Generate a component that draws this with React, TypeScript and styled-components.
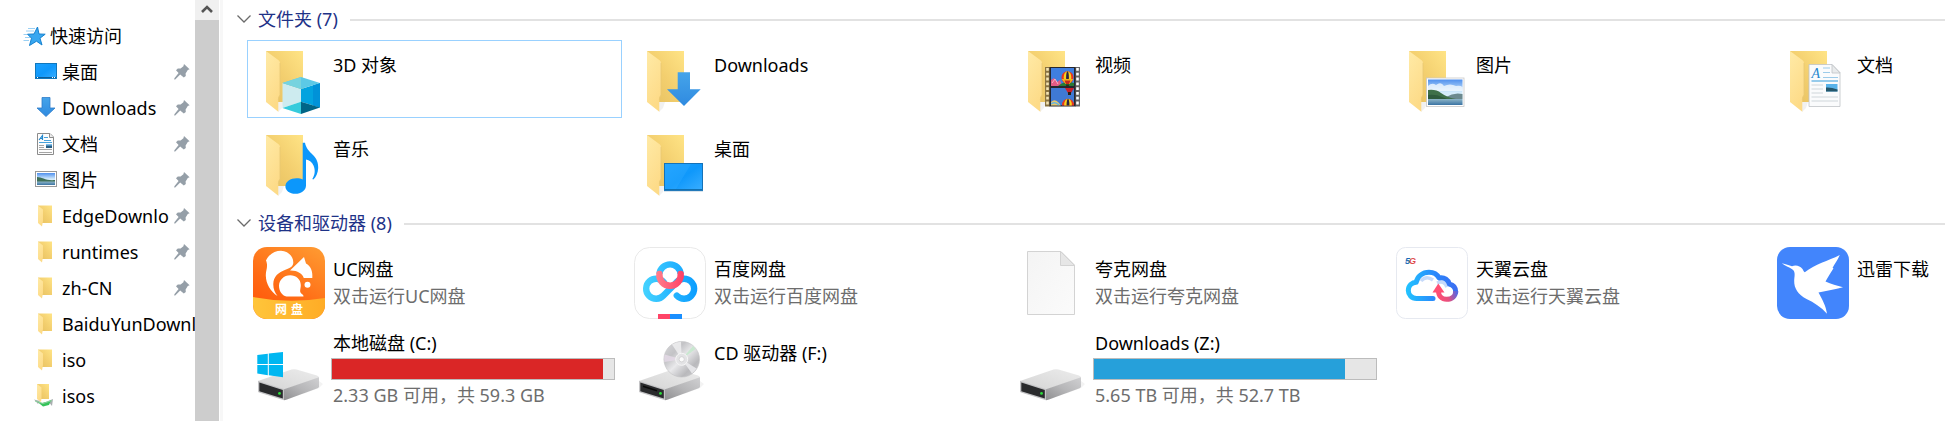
import React from "react";
import styled, { createGlobalStyle } from "styled-components";

const GlobalStyle = createGlobalStyle`
  *, *::before, *::after { box-sizing: border-box; }
  html, body, #root { height: 100%; }
  body {
    margin: 0;
    overflow: hidden;
    background: #fff;
    color: #000;
    font-family: "Noto Sans", "Noto Sans CJK SC", sans-serif;
    font-size: 18px;
    line-height: 24px;
  }
  a { color: inherit; text-decoration: none; }
  button { font: inherit; color: inherit; border: 0; padding: 0; background: none; }
  h2, ul { margin: 0; padding: 0; font-weight: 400; font-size: 18px; }
  ul { list-style: none; }
  svg { display: block; flex: none; }
`;

const Window = styled.div`
  display: flex;
  height: 100%;
  overflow: hidden;
`;

const Sidebar = styled.nav`
  flex: none;
  width: 195px;
  padding-top: 18px;
  overflow: hidden;
`;

const NavLink = styled.a<{ $root?: boolean }>`
  display: flex;
  align-items: center;
  gap: 4px;
  height: 36px;
  padding-left: ${(p) => (p.$root ? 22 : 34)}px;
`;

const NavLabel = styled.span`
  flex: 1;
  min-width: 0;
  overflow: hidden;
  white-space: nowrap;
`;

const PinSlot = styled.span`
  flex: none;
  width: 18px;
  margin-right: 4px;
`;

const Scrollbar = styled.div`
  flex: none;
  display: flex;
  flex-direction: column;
  width: 24px;
  background: #f0f0f0;
`;

const ScrollUp = styled.button`
  display: flex;
  align-items: center;
  justify-content: center;
  height: 20px;
  background: #f0f0f0;
`;

const ScrollThumb = styled.div`
  flex: 1;
  background: #cdcdcd;
`;

const Splitter = styled.div`
  flex: none;
  width: 4px;
  background: #f7f7f7;
  border-left: 1px solid #fff;
`;

const Content = styled.main`
  flex: 1;
  min-width: 0;
  padding-left: 13px;
  overflow: hidden;
`;

const Group = styled.section`
  margin-bottom: 2px;
`;

const GroupHeader = styled.h2`
  height: 40px;
  display: flex;
  align-items: center;
  gap: 12px;
  color: #1e3287;
  &::after {
    content: "";
    flex: 1;
    height: 2px;
    background: #e2e2e2;
  }
`;

const GroupToggle = styled.button`
  display: flex;
  align-items: center;
  gap: 6px;
  line-height: 24px;
  padding-bottom: 2px;
`;

const TileGrid = styled.ul`
  display: grid;
  grid-template-columns: repeat(5, 375px);
  grid-auto-rows: 78px;
  gap: 6px;
  padding-left: 11px;
`;

const Tile = styled.a<{ $selected?: boolean }>`
  display: flex;
  gap: 6px;
  height: 100%;
  padding: 2px 5px;
  border: 1px solid ${(p) => (p.$selected ? "#99d1ff" : "transparent")};
`;

const TileBody = styled.div<{ $drive?: boolean }>`
  flex: 1;
  min-width: 0;
  display: flex;
  flex-direction: column;
  padding-top: ${(p) => (p.$drive ? 0 : 10)}px;
  white-space: nowrap;
`;

const Title = styled.span`
  padding-left: 2px;
`;

const Caption = styled.span`
  padding-left: 2px;
  margin-top: 3px;
  color: #6d6d6d;
`;

const Meter = styled.div`
  flex: none;
  height: 22px;
  width: 284px;
  margin-top: 3px;
  border: 1px solid #bcbcbc;
  background: #e6e6e6;
`;

const MeterFill = styled.div<{ $full?: boolean }>`
  height: 100%;
  background: ${(p) => (p.$full ? "#da2626" : "#26a0da")};
`;

const SharedDefs = styled.svg`
  position: absolute;
`;

/* ---------- shared gradients ---------- */

const Gradients = () => (
  <SharedDefs width="0" height="0" aria-hidden="true">
    <defs>
      <linearGradient id="fBack" x1="0" y1="1" x2="1" y2="0">
        <stop offset="0" stopColor="#e6c05f" />
        <stop offset="0.5" stopColor="#f3cf6f" />
        <stop offset="1" stopColor="#ffe486" />
      </linearGradient>
      <linearGradient id="fFlap" x1="0" y1="0" x2="0.4" y2="1">
        <stop offset="0" stopColor="#ffeaa6" />
        <stop offset="1" stopColor="#fddb88" />
      </linearGradient>
      <linearGradient id="sky" x1="0" y1="0" x2="0" y2="1">
        <stop offset="0" stopColor="#4f90ee" />
        <stop offset="0.5" stopColor="#d3ebfb" />
        <stop offset="1" stopColor="#e8f4fa" />
      </linearGradient>
      <linearGradient id="sea" x1="0" y1="0" x2="0" y2="1">
        <stop offset="0" stopColor="#8fb6c8" />
        <stop offset="1" stopColor="#3a73a3" />
      </linearGradient>
      <linearGradient id="screen" x1="0" y1="0" x2="1" y2="1">
        <stop offset="0" stopColor="#1da2ff" />
        <stop offset="0.5" stopColor="#0f98fb" />
        <stop offset="1" stopColor="#3aaeff" />
      </linearGradient>
      <linearGradient id="arrow" x1="0" y1="0" x2="0" y2="1">
        <stop offset="0" stopColor="#45a4ea" />
        <stop offset="1" stopColor="#2f8ae0" />
      </linearGradient>
      <linearGradient id="dTop" x1="0" y1="1" x2="1" y2="0">
        <stop offset="0" stopColor="#d4d4d4" />
        <stop offset="1" stopColor="#ececec" />
      </linearGradient>
      <linearGradient id="dSide" x1="0" y1="1" x2="1" y2="0">
        <stop offset="0" stopColor="#8f8f91" />
        <stop offset="0.5" stopColor="#b6b6b8" />
        <stop offset="1" stopColor="#d0d0d2" />
      </linearGradient>
      <linearGradient id="page" x1="0" y1="0" x2="1" y2="1">
        <stop offset="0" stopColor="#f4f4f4" />
        <stop offset="1" stopColor="#fbfbfb" />
      </linearGradient>
    </defs>
  </SharedDefs>
);

/* ---------- sidebar icons ---------- */

const Small = ({ children }: { children: React.ReactNode }) => (
  <svg width="24" height="24" viewBox="0 0 24 24" aria-hidden="true">{children}</svg>
);

const StarIcon = () => (
  <Small>
    <path d="M15.5 3 17 10 23.2 10.200 18 14.200 20 21 14.500 17.200 7.500 21.500 9.500 14.200 5.500 10.200 12 10Z" fill="#38a7f0" stroke="#1581cf" strokeWidth="1" />
    <path d="M6 4.5H13M4 7H12M1.500 10.500H5M3 13.500H8M1.500 16.500H7" stroke="#8ecbf3" strokeWidth="0.9" />
  </Small>
);

const DesktopSmall = () => (
  <Small>
    <rect x="1.5" y="3.5" width="21" height="15" fill="url(#screen)" stroke="#1178bd" />
    <path d="M2 17.5H22" stroke="#0c5d98" />
    <path d="M3 17.5H4M18 17.5H19M20 17.5H21" stroke="#fff" />
  </Small>
);

const DownloadSmall = () => (
  <Small>
    <path d="M8 1.5H16V12H21L12 20.5 3 12H8Z" fill="url(#arrow)" stroke="#2d7cc9" strokeWidth="0.8" />
  </Small>
);

const DocSmall = () => (
  <Small>
    <path d="M3.5 1.5H16L19.5 5V22.5H3.5Z" fill="#fdfdfd" stroke="#8b8b8b" />
    <path d="M15.5 1.5V5.5H19.5" fill="#eee" stroke="#8b8b8b" />
    <path d="M5 8 8.5 3.5V8M6 6.5H9" fill="none" stroke="#2387cc" strokeWidth="1.2" />
    <path d="M10 5.500H14M10 8.500H17M5 10.500H18" stroke="#49a3dc" />
    <path d="M5 13.500H10M5 15.500H10M5 17.5H18M5 20.500H18" stroke="#a5a5a5" />
    <rect x="12" y="12" width="6" height="4" fill="#285f86" />
    <path d="M12 12H18V13.500H12Z" fill="#7cc0ee" />
  </Small>
);

const PictureSmall = () => (
  <Small>
    <rect x="1.5" y="3.5" width="21" height="15" fill="#fff" stroke="#999" />
    <rect x="3" y="5" width="18" height="12" fill="url(#sky)" />
    <path d="M3 9C8 9 12 13 21 12V14H3Z" fill="#3f6f59" />
    <path d="M3 13.5H21V17H3Z" fill="url(#sea)" />
  </Small>
);

const FolderSmall = () => (
  <Small>
    <path d="M4 1.5H18V19H4Z" fill="url(#fBack)" />
    <path d="M4 1.5 9 5.5V17L8 22.5 4 19Z" fill="url(#fFlap)" />
  </Small>
);

const SharedFolderSmall = () => (
  <Small>
    <path d="M3 0H15V15H3Z" fill="url(#fBack)" />
    <path d="M3 0 7.5 3.5V14L7 18 3 15Z" fill="url(#fFlap)" />
    <path d="M0 15.500 6 17 4 20ZM19 15 14 17 18 22Z" fill="#a9afb0" />
    <path d="M3 17.500 8 19 17 16.500 15 21 9 22.500Z" fill="#35c45a" />
    <path d="M1 17 9 19.5 18 16.5" stroke="#8ccf9d" fill="none" />
  </Small>
);

const PinIcon = () => (
  <svg width="18" height="18" viewBox="0 0 18 18" aria-hidden="true">
    <path d="M11 1 16.6 6.2 14.8 7 12.6 10.4 12.8 13 10.8 14.6 7.2 11.4 2.2 16.4 1.2 16.4 1.4 15.2 5.6 10 3 7.2 4.8 5.6 7.6 5.6 10.4 3.2Z" fill="#959fa8" />
  </svg>
);

/* ---------- tile icons ---------- */

const Large = ({ children }: { children: React.ReactNode }) => (
  <svg width="72" height="72" viewBox="0 0 72 72" aria-hidden="true">{children}</svg>
);

const FolderShape = () => (
  <>
    <path d="M25 69 29 65 31 59H25Z" fill="#f1f1f1" />
    <path d="M13 8H50V59H13Z" fill="url(#fBack)" />
    <path d="M13 8 25.6 17.2Q27 18.4 27 20V52Q25.3 53.5 25.3 57V68.7L13 59Z" fill="url(#fFlap)" />
    <path d="M27 20V52Q25.5 53.5 25.3 57" stroke="#e9c873" strokeWidth="0.8" fill="none" />
  </>
);

const Objects3DIcon = () => (
  <Large>
    <FolderShape />
    <path d="M29.5 40 48 46 48 58.7 29.5 65Z" fill="#cdebef" />
    <path d="M67 40 48 46V58.7L67 64.5Z" fill="#02a3df" />
    <path d="M60 42.2 67 40V64.5L60 62.4Z" fill="#0092d8" />
    <path d="M29.5 40 48 34 67 40 48 46Z" fill="#5cc9e6" />
    <path d="M29.5 40 48 34V46Z" fill="#76d3df" />
    <path d="M29.5 65 48 58.7V71Z" fill="#35cbdc" />
    <path d="M67 64.5 48 58.7V71Z" fill="#006587" />
  </Large>
);

const DownloadsIcon = () => (
  <Large>
    <FolderShape />
    <path d="M43.7 29.3H56V46.3H66.7L50 63 33 46.3H43.7Z" fill="url(#arrow)" />
  </Large>
);

const Balloon = ({ x, y }: { x: number; y: number }) => (
  <g transform={`translate(${x} ${y})`}>
    <ellipse rx="6" ry="6.2" fill="#e8361f" />
    <ellipse rx="3.8" ry="6.2" fill="#f7d21e" />
    <ellipse rx="1.4" ry="6.2" fill="#2c2440" />
    <path d="M-5.8 1.5H5.8L2 6.5H-2Z" fill="#f2b51b" />
    <path d="M-3 3H3L1.5 6.5H-1.5Z" fill="#c2271e" />
    <rect x="-1.4" y="7" width="2.8" height="2" fill="#3b2412" />
  </g>
);

const VideosIcon = () => (
  <Large>
    <FolderShape />
    <rect x="30" y="24" width="5" height="39.5" fill="#8a7340" />
    <rect x="60" y="24" width="5" height="39.5" fill="#666" />
    <path d="M32.5 25V63" stroke="#f3e4b5" strokeWidth="2.6" strokeDasharray="2.8 2" />
    <path d="M62.5 25V63" stroke="#fff" strokeWidth="2.6" strokeDasharray="2.8 2" />
    <rect x="34.5" y="24" width="26" height="39.5" fill="#26262c" />
    <clipPath id="frameA"><rect x="36" y="25" width="23" height="18" /></clipPath>
    <clipPath id="frameB"><rect x="36" y="45" width="23" height="17.5" /></clipPath>
    <g clipPath="url(#frameA)">
      <rect x="36" y="25" width="23" height="18" fill="#3f7fe0" />
      <path d="M36 37 39 35 42 39 45 37 47 43H36Z" fill="#e35c86" />
      <path d="M37 40 40 36 43 41" stroke="#f7b6c4" fill="none" />
      <path d="M43 43Q50 37 59 40V43Z" fill="#257a36" />
      <Balloon x={52.5} y={34.5} />
    </g>
    <g clipPath="url(#frameB)">
      <rect x="36" y="45" width="23" height="17.5" fill="#3f79d4" />
      <path d="M50 45H59L56 50H53Z" fill="#c9202a" />
      <rect x="53" y="49" width="3" height="3" fill="#2b1b12" />
      <path d="M36 59Q40 55 44 60L46 63H36Z" fill="#e8c66a" />
      <path d="M36 61Q40 58 44 62" stroke="#62b4e6" strokeWidth="1.5" fill="none" />
      <Balloon x={53} y={62} />
    </g>
  </Large>
);

const PicturesIcon = () => (
  <Large>
    <FolderShape />
    <rect x="30.5" y="35" width="37.5" height="28.5" fill="#fff" stroke="#c9c9c9" strokeWidth="0.8" />
    <rect x="32" y="36.5" width="34.5" height="25.5" fill="url(#sky)" />
    <path d="M32 43Q36 39 40 42 45 38 48 43 54 40 60 43 64 42 66.5 44V48H32Z" fill="#f3f9fe" opacity="0.8" />
    <path d="M50 54Q58 49 66.5 51V56H50Z" fill="#6d8a8f" />
    <path d="M32 47Q40 46 45 50 52 55 60 56H32Z" fill="#3f7049" />
    <path d="M32 52Q40 51 46 54L54 57H32Z" fill="#2f5b3d" />
    <rect x="32" y="56" width="34.5" height="6" fill="url(#sea)" />
  </Large>
);

const DocumentsIcon = () => (
  <Large>
    <FolderShape />
    <path d="M32 21.5H55L63 29.5V63.5H32Z" fill="#fafbfc" stroke="#bfc3c6" strokeWidth="0.8" />
    <path d="M55 21.5V30H63Z" fill="#e9ebec" stroke="#bfc3c6" strokeWidth="0.8" />
    <text x="34.5" y="35" fontFamily="Liberation Serif, serif" fontStyle="italic" fontSize="14" fill="#1f87cf">A</text>
    <path d="M46 25H53M46 29.5H53M46 34.5H61" stroke="#9ccbe9" />
    <path d="M34.5 38H61" stroke="#6bb6e4" strokeWidth="1.4" />
    <path d="M34.5 42H46M34.5 46H46M34.5 50H46M34.5 54H61M34.5 58H61" stroke="#cfd6da" />
    <rect x="49" y="41" width="11.5" height="7.5" fill="#59b3ea" />
    <path d="M49 44.5Q54 44 60.5 46.5V48.5H49Z" fill="#24566b" />
  </Large>
);

const MusicIcon = () => (
  <Large>
    <FolderShape />
    <path d="M49.7 15.7H52C53 21 56 24 60 28 64 32 65.3 36 65.2 41 65 46 63 50 60.3 52.6L59.3 52C62 48 62.5 43 60.5 38.5 59 35 56.5 33 53 32.5V58.5C53 63.5 48 66.8 42.4 66.8 36.5 66.8 32.4 63.5 32.4 59.5 32.4 54.5 37.5 51.3 43.5 51.3 46 51.3 48.5 51.8 49.7 52.5Z" fill="#0c97fb" />
  </Large>
);

const DesktopIcon = () => (
  <Large>
    <FolderShape />
    <rect x="30.5" y="36.5" width="38" height="27" fill="url(#screen)" stroke="#1572b8" />
    <path d="M31 37H57L42 62H31Z" fill="#35acff" opacity="0.35" />
    <path d="M31 62.6H68" stroke="#0f6cab" strokeWidth="1" />
    <path d="M30 64.4H69" stroke="#c9d9e4" strokeWidth="0.8" />
  </Large>
);

const UcIcon = () => (
  <Large>
    <defs>
      <linearGradient id="ucBg" x1="1" y1="0" x2="0.4" y2="1">
        <stop offset="0" stopColor="#ff9d33" />
        <stop offset="0.7" stopColor="#ff6a14" />
        <stop offset="1" stopColor="#ff5a0c" />
      </linearGradient>
      <linearGradient id="ucBand" x1="0" y1="0" x2="1" y2="0">
        <stop offset="0" stopColor="#ffc53a" />
        <stop offset="1" stopColor="#ffac26" />
      </linearGradient>
      <clipPath id="ucClip"><rect width="72" height="72" rx="14" /></clipPath>
    </defs>
    <g clipPath="url(#ucClip)">
      <rect width="72" height="72" fill="url(#ucBg)" />
      <path d="M0 50Q36 57 72 51V72H0Z" fill="url(#ucBand)" />
      <path d="M24.500 49C17.500 44.500 13 37 12.800 28.500 12.700 23 15.500 19.500 13 13.500 16 7 22 3.800 28 3.800 35 4.200 40.300 9 40.300 15.500 40.300 18.500 38.500 20.500 33 22.500 25 25.500 20.500 29.500 20.300 37 20.200 41.500 21.800 45.500 24.500 49Z" fill="#fff" />
      <path d="M37 23.500 51 10 53 16.500C57.500 19 60 24 59.300 31H50.800C49.500 26.500 44 23.200 37 23.500Z" fill="#fff" />
      <path d="M37.2 28.200C43 28.200 47.800 32.300 47.800 38 47.800 42 46.500 43.500 47.700 45.800 48.500 47.300 51 48 50.500 49.500H33.5C29 48.500 26 44 26 39 26 33 30.800 28.200 37.2 28.200Z" fill="#fff" />
      <circle cx="54.5" cy="37.8" r="3" fill="#fff" />
      <text x="22" y="67" fontSize="12" fontWeight="700" fill="#fff" fontFamily="Noto Sans CJK SC, sans-serif">网</text>
      <text x="38" y="67" fontSize="12" fontWeight="700" fill="#fff" fontFamily="Noto Sans CJK SC, sans-serif">盘</text>
    </g>
  </Large>
);

const BaiduIcon = () => (
  <Large>
    <defs>
      <linearGradient id="bdBlue" gradientUnits="userSpaceOnUse" x1="9" y1="0" x2="63" y2="0">
        <stop offset="0" stopColor="#45d3ff" />
        <stop offset="1" stopColor="#0b9dff" />
      </linearGradient>
      <linearGradient id="bdRed" gradientUnits="userSpaceOnUse" x1="22" y1="0" x2="50" y2="0">
        <stop offset="0" stopColor="#ff7f8c" />
        <stop offset="1" stopColor="#ff3f65" />
      </linearGradient>
    </defs>
    <rect x="0.5" y="0.5" width="71" height="71" rx="15" fill="#fff" stroke="#e9e9e9" />
    <g fill="none" stroke="url(#bdBlue)" strokeWidth="6.4" strokeLinecap="round">
      <path d="M25.4 27A10.7 10.7 0 0 1 46.7 27" strokeLinecap="butt" />
      <path d="M30 35.5A10 10 0 1 0 29.5 48.5L42.6 35.2A10 10 0 1 1 42.8 48.6" />
    </g>
    <path d="M25.4 27A10.7 10.7 0 1 0 46.7 27" fill="none" stroke="url(#bdRed)" strokeWidth="6.4" strokeLinecap="round" />
    <rect x="24" y="67" width="12" height="5" fill="#ff4467" />
    <rect x="36" y="67" width="12" height="5" fill="#1a8fff" />
  </Large>
);

const BlankFileIcon = () => (
  <Large>
    <path d="M12.5 4.5H46L59.5 18V67.5H12.5Z" fill="url(#page)" stroke="#d3d3d3" />
    <path d="M45.5 4.5V18.5H59.5Z" fill="#e6e6e6" stroke="#d3d3d3" />
  </Large>
);

const TianyiIcon = () => (
  <Large>
    <defs>
      <linearGradient id="tyBlue" gradientUnits="userSpaceOnUse" x1="10" y1="0" x2="62" y2="0">
        <stop offset="0" stopColor="#22c4ff" />
        <stop offset="0.6" stopColor="#2a83fb" />
        <stop offset="1" stopColor="#3d6cf0" />
      </linearGradient>
      <linearGradient id="tyRed" gradientUnits="userSpaceOnUse" x1="42" y1="50" x2="60" y2="44">
        <stop offset="0" stopColor="#ff4f74" />
        <stop offset="0.5" stopColor="#e4507f" />
        <stop offset="1" stopColor="#5a67e0" />
      </linearGradient>
    </defs>
    <rect x="0.5" y="0.5" width="71" height="71" rx="9" fill="#fff" stroke="#e6e9f0" />
    <path d="M25 34Q30 28 37 33M41 36Q48 33 51 40" fill="none" stroke="#c6dafa" strokeWidth="3.5" />
    <path d="M37 51.5H20.5C15.5 51.5 12.3 47.5 12.3 43.5 12.3 38.5 16 35.3 20.3 35.3 21 29.5 26.5 25.3 33 25.3 38 25.3 41.5 28 43 31 48.5 29.8 52.5 33 53.3 37 57.5 38 59.7 41 59.7 45" fill="none" stroke="url(#tyBlue)" strokeWidth="5" strokeLinecap="round" strokeLinejoin="round" />
    <path d="M42.5 44C42.5 49 46 52.3 50.5 52.3 56 52.3 59.7 49 59.7 44" fill="none" stroke="url(#tyRed)" strokeWidth="5" />
    <path d="M42.3 36.5 48.5 45.5H36.5Z" fill="#ff4f74" />
    <text x="9" y="16.5" fontSize="9" fontWeight="700" fontStyle="italic" fontFamily="Liberation Sans, sans-serif" fill="#1a6cb8">5</text>
    <text x="13" y="16.5" fontSize="9" fontWeight="700" fontStyle="italic" fontFamily="Liberation Sans, sans-serif" fill="#e04848">G</text>
  </Large>
);

const ThunderIcon = () => (
  <Large>
    <rect width="72" height="72" rx="13" fill="#4285fc" />
    <path d="M4.8 16.3C9 17 12 18.6 15 19.2 18.5 17.5 23 18.5 25.5 22 26.3 23.5 26.8 24.5 27.8 25.3 38 17 51 14 62.8 8 60.5 13.5 57.5 17 55.5 21L56.5 21.3C53.5 26 51 30 48.5 34.5 54 37 60 38.5 66 40.3 58 42.5 50 44 41.5 45.5 45 52 49 59 50 66.8 44 60 37 55.5 29.5 52 21 47.5 17 41 17.2 34 17.2 30 19 25 15.5 22.5 12 20 8 19 4.8 16.3Z" fill="#fff" />
  </Large>
);

const DriveShape = () => (
  <>
    <path d="M50 63 66 57 70 53 66 50Z" fill="#f3f3f3" />
    <path d="M5 50 38.5 38.6Q41 37.9 43.5 38.5L64 44.6Q66 45.3 66 47L31.5 58.5Z" fill="url(#dTop)" />
    <path d="M31 58.3 66 46.3V55.5Q66 56.7 64.5 57.3L34 68.5Q31 69.5 31 69Z" fill="url(#dSide)" />
    <path d="M5 49.7 31 58V69.2L6 61.5Q5 61.2 5 60.5Z" fill="#c4c4c6" />
    <path d="M6.3 51.4 29.8 58.9V67.5L6.3 60.2Z" fill="#2a2b2d" />
    <circle cx="26.5" cy="62.4" r="1.4" fill="#2be03a" />
  </>
);

const SystemDriveIcon = () => (
  <Large>
    <DriveShape />
    <path d="M4.3 24 14.8 22.7V33H4.3ZM15.8 22.6 30 21V33H15.8ZM4.3 34H14.8V44.2L4.3 42.6ZM15.8 34H30V46.3L15.8 44.3Z" fill="#00b7f1" />
  </Large>
);

const CdDriveIcon = () => (
  <Large>
    <defs>
      <linearGradient id="disc" x1="0" y1="0" x2="1" y2="1">
        <stop offset="0" stopColor="#d9d9dc" />
        <stop offset="0.3" stopColor="#c3c3c6" />
        <stop offset="0.5" stopColor="#e9e9eb" />
        <stop offset="0.75" stopColor="#b9b9bc" />
        <stop offset="1" stopColor="#cfcfd2" />
      </linearGradient>
    </defs>
    <DriveShape />
    <path d="M9 55.3 23 59.7" stroke="#0a0a0a" strokeWidth="1.5" />
    <circle cx="47.7" cy="28.3" r="17.8" fill="url(#disc)" stroke="#c2c2c4" strokeWidth="0.6" />
    <path d="M47.7 28.3 38 13.5A17.5 17.5 0 0 1 47 10.8Z" fill="#f1f1f3" opacity="0.8" />
    <path d="M47.7 28.3 59 15A17.5 17.5 0 0 1 61.5 18Z" fill="#c5e8cd" opacity="0.9" />
    <path d="M47.7 28.3 58 42.5A17.5 17.5 0 0 0 62.5 37.5Z" fill="#efeff1" opacity="0.8" />
    <path d="M47.7 28.3 30.6 23.5A17.5 17.5 0 0 0 30.4 31Z" fill="#e6dbe8" opacity="0.8" />
    <circle cx="47.7" cy="28.3" r="6" fill="#e3e3e5" stroke="#f6f6f6" />
    <circle cx="47.7" cy="28.3" r="2.6" fill="#fbfbfb" stroke="#c8c8ca" strokeWidth="0.7" />
  </Large>
);

const DriveIcon = () => (
  <Large>
    <DriveShape />
  </Large>
);

/* ---------- data ---------- */

type NavItem = { label: string; icon: React.FC; pinned?: boolean };

const navItems: NavItem[] = [
  { label: "桌面", icon: DesktopSmall, pinned: true },
  { label: "Downloads", icon: DownloadSmall, pinned: true },
  { label: "文档", icon: DocSmall, pinned: true },
  { label: "图片", icon: PictureSmall, pinned: true },
  { label: "EdgeDownload", icon: FolderSmall, pinned: true },
  { label: "runtimes", icon: FolderSmall, pinned: true },
  { label: "zh-CN", icon: FolderSmall, pinned: true },
  { label: "BaiduYunDownload", icon: FolderSmall },
  { label: "iso", icon: FolderSmall },
  { label: "isos", icon: SharedFolderSmall },
];

type Item = {
  label: string;
  icon: React.FC;
  caption?: string;
  used?: number;
  full?: boolean;
  selected?: boolean;
};

const folders: Item[] = [
  { label: "3D 对象", icon: Objects3DIcon, selected: true },
  { label: "Downloads", icon: DownloadsIcon },
  { label: "视频", icon: VideosIcon },
  { label: "图片", icon: PicturesIcon },
  { label: "文档", icon: DocumentsIcon },
  { label: "音乐", icon: MusicIcon },
  { label: "桌面", icon: DesktopIcon },
];

const devices: Item[] = [
  { label: "UC网盘", icon: UcIcon, caption: "双击运行UC网盘" },
  { label: "百度网盘", icon: BaiduIcon, caption: "双击运行百度网盘" },
  { label: "夸克网盘", icon: BlankFileIcon, caption: "双击运行夸克网盘" },
  { label: "天翼云盘", icon: TianyiIcon, caption: "双击运行天翼云盘" },
  { label: "迅雷下载", icon: ThunderIcon },
  { label: "本地磁盘 (C:)", icon: SystemDriveIcon, caption: "2.33 GB 可用，共 59.3 GB", used: 96, full: true },
  { label: "CD 驱动器 (F:)", icon: CdDriveIcon },
  { label: "Downloads (Z:)", icon: DriveIcon, caption: "5.65 TB 可用，共 52.7 TB", used: 89 },
];

const ItemTile = ({ item }: { item: Item }) => {
  const Icon = item.icon;
  const drive = item.used !== undefined;
  return (
    <li>
      <Tile href="#" $selected={item.selected}>
        <Icon />
        <TileBody $drive={drive}>
          <Title>{item.label}</Title>
          {drive && (
            <Meter role="meter" aria-label={item.label} aria-valuemin={0} aria-valuemax={100} aria-valuenow={item.used}>
              <MeterFill $full={item.full} style={{ width: `${item.used}%` }} />
            </Meter>
          )}
          {item.caption && <Caption>{item.caption}</Caption>}
        </TileBody>
      </Tile>
    </li>
  );
};

const ItemGroup = ({ title, items }: { title: string; items: Item[] }) => (
  <Group>
    <GroupHeader>
      <GroupToggle type="button" aria-expanded="true">
        <svg width="16" height="16" viewBox="0 0 16 16" aria-hidden="true">
          <path d="M1.5 4.5 8 11 14.5 4.5" fill="none" stroke="#6b6b6b" strokeWidth="1.3" />
        </svg>
        {title}
      </GroupToggle>
    </GroupHeader>
    <TileGrid>
      {items.map((item) => (
        <ItemTile key={item.label} item={item} />
      ))}
    </TileGrid>
  </Group>
);

export default function App() {
  return (
    <>
      <GlobalStyle />
      <Gradients />
      <Window>
        <Sidebar>
          <NavLink href="#" $root>
            <StarIcon />
            <NavLabel>快速访问</NavLabel>
          </NavLink>
          {navItems.map(({ label, icon: Icon, pinned }) => (
            <NavLink href="#" key={label}>
              <Icon />
              <NavLabel>{label}</NavLabel>
              {pinned && (
                <PinSlot>
                  <PinIcon />
                </PinSlot>
              )}
            </NavLink>
          ))}
        </Sidebar>
        <Scrollbar>
          <ScrollUp type="button" aria-label="向上滚动">
            <svg width="14" height="12" viewBox="0 0 14 12" aria-hidden="true">
              <path d="M2 8 7 3 12 8" fill="none" stroke="#555" strokeWidth="2.6" />
            </svg>
          </ScrollUp>
          <ScrollThumb />
        </Scrollbar>
        <Splitter />
        <Content>
          <ItemGroup title="文件夹 (7)" items={folders} />
          <ItemGroup title="设备和驱动器 (8)" items={devices} />
        </Content>
      </Window>
    </>
  );
}
